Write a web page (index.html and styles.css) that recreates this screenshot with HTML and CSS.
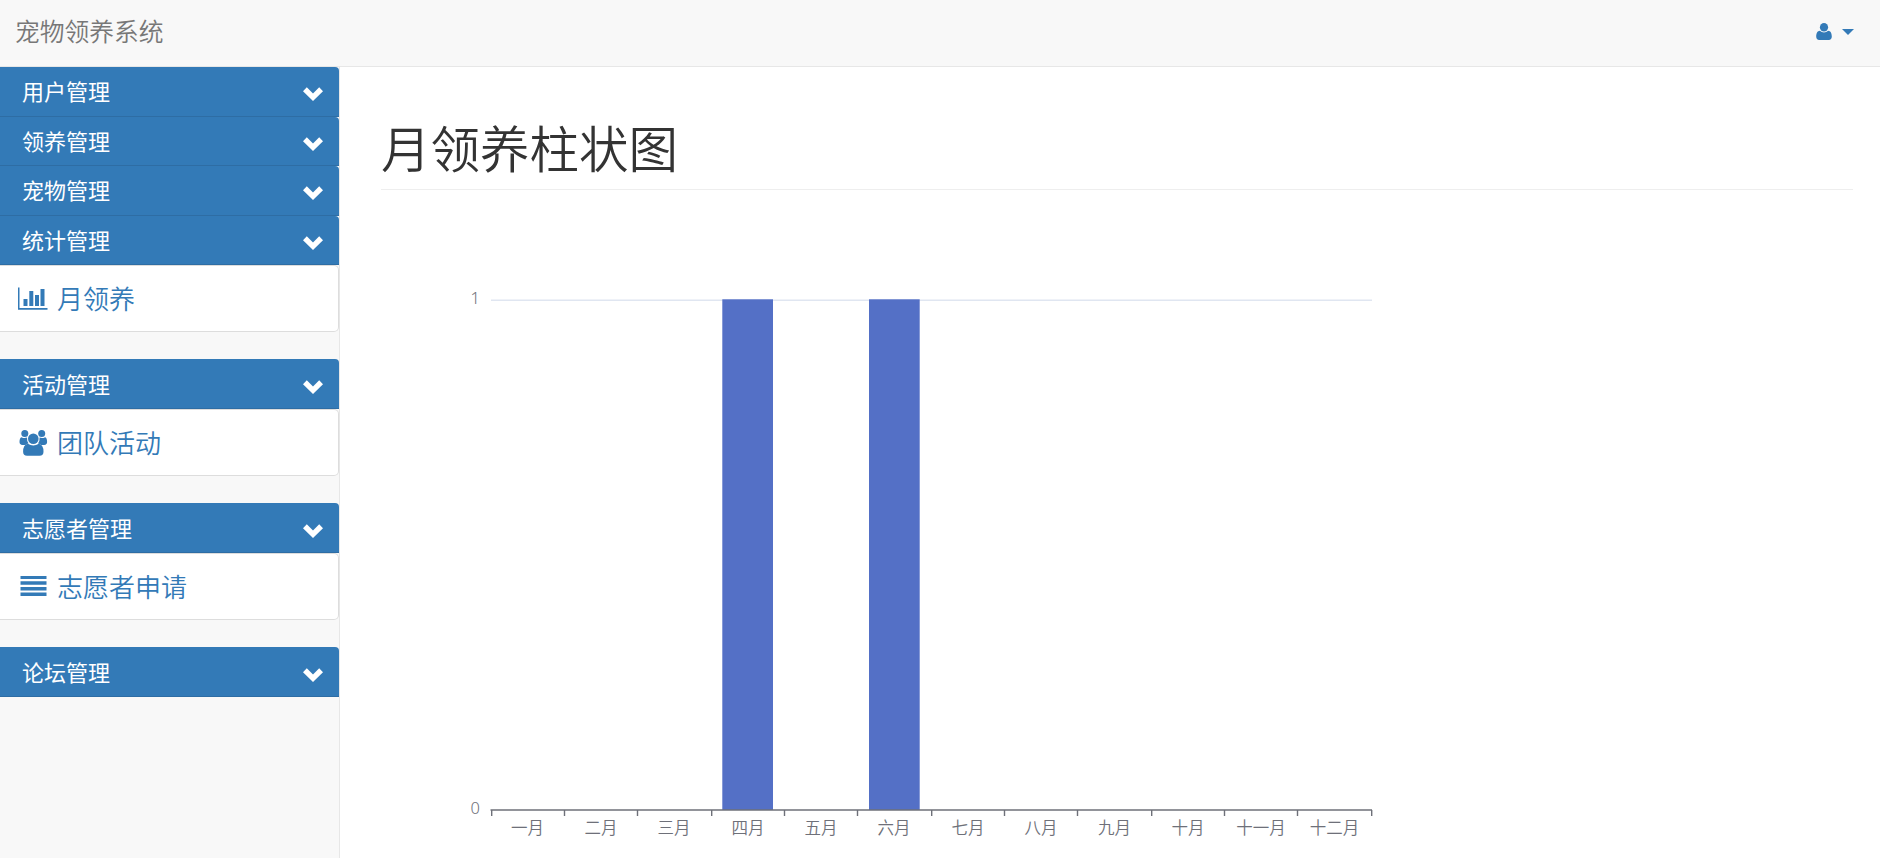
FILE: index.html
```html
<!DOCTYPE html>
<html lang="zh-CN">
<head>
  <meta charset="UTF-8">
  <meta name="viewport" content="width=device-width, initial-scale=1.0">
  <title>宠物领养系统</title>
  <link rel="stylesheet" href="styles.css">
</head>
<body>
  <svg width="0" height="0" class="sprite">
    <symbol id="chevron" viewBox="0 0 20 14">
      <path d="M0 4.2 L3.8 .3 L10 6.4 L16.2 .3 L20 4.2 L10 14 Z"/>
    </symbol>
  </svg>

  <!-- Navbar -->
  <nav class="navbar">
    <a class="navbar-brand">宠物领养系统</a>
    <a class="navbar-user">
      <svg class="icon-user" viewBox="0 0 16 17"><ellipse cx="8" cy="4.3" rx="4.1" ry="4.3"/><path d="M4 7.7C1.2 7.9.2 10.4.2 13.6.2 15.7 1.4 17 3.2 17h9.6c1.8 0 3-1.3 3-3.4 0-3.2-1-5.7-3.8-5.9C10.8 8.9 9.500 9.400 8 9.400S5.200 8.900 4 7.700z"/></svg>
      <span class="caret"></span>
    </a>
  </nav>

  <div class="wrapper">
    <!-- Sidebar -->
    <aside class="sidebar">
      <div class="panel-heading">用户管理<svg class="chevron"><use href="#chevron"/></svg></div>
      <div class="panel-heading">领养管理<svg class="chevron"><use href="#chevron"/></svg></div>
      <div class="panel-heading">宠物管理<svg class="chevron"><use href="#chevron"/></svg></div>
      <div class="panel-heading">统计管理<svg class="chevron"><use href="#chevron"/></svg></div>
      <a class="panel-item">
        <svg class="icon" viewBox="0 0 30 26"><path d="M0 1.500h1.500V22H29.500v1.700H0zM5.500 13h4v7h-4zM11.300 5h4v15h-4zM17 9h4v11h-4zM22.500 3h4v17h-4z"/></svg>
        <span>月领养</span>
      </a>

      <div class="panel-heading">活动管理<svg class="chevron"><use href="#chevron"/></svg></div>
      <a class="panel-item">
        <svg class="icon" viewBox="0 0 30 26">
          <circle cx="6.800" cy="3.500" r="3.500"/><circle cx="23.700" cy="3.500" r="3.500"/><circle cx="15.300" cy="8.800" r="5.300"/>
          <path d="M3.500 7.200q2.700 1.500 5.500.4-.3 3.700 1.600 5.900-2 .3-3.200 1.500H4.500Q1.500 14.600 1.500 12q0-4.200 2-4.800zM27.100 7.200q-2.700 1.500-5.500.4.3 3.700-1.600 5.900 2 .3 3.200 1.500h2.900q3-.4 3-3 0-4.200-2-4.800z"/>
          <path d="M9.800 13.700q5.500 3.600 11 0 4.700.8 4.700 8 0 4.100-4 4.100h-12.400q-4 0-4-4.100 0-7.200 4.700-8z"/>
        </svg>
        <span>团队活动</span>
      </a>

      <div class="panel-heading">志愿者管理<svg class="chevron"><use href="#chevron"/></svg></div>
      <a class="panel-item">
        <svg class="icon" viewBox="0 0 30 26"><path d="M2.500 2h26v3H2.500zM2.500 7.300h26v3.500H2.500zM2.500 13h26v3.500H2.500zM2.500 18.500h26V22H2.500z"/></svg>
        <span>志愿者申请</span>
      </a>

      <div class="panel-heading">论坛管理<svg class="chevron"><use href="#chevron"/></svg></div>
    </aside>

    <!-- Content -->
    <main class="page">
      <h1 class="page-header">月领养柱状图</h1>
      <svg class="chart" width="1100" height="620" viewBox="381 230 1100 620">
        <path class="grid-line" d="M491 300.300H1372"/>
        <g class="bars">
          <rect x="722.300" y="299.300" width="50.700" height="510.700"/>
          <rect x="869" y="299.300" width="50.700" height="510.700"/>
        </g>
        <path class="axis" d="M490.500 810H1372"/>
        <path class="ticks" d="M491.700 810v6M564.500 810v6M637.500 810v6M711.700 810v6M784.500 810v6M857.500 810v6M931.700 810v6M1004.500 810v6M1077.500 810v6M1151.700 810v6M1224.500 810v6M1297.500 810v6M1371.700 810v6"/>
        <g class="y-label">
          <text x="480" y="304">1</text>
          <text x="480" y="814">0</text>
        </g>
        <g class="x-label">
          <text x="527.500" y="834">一月</text>
          <text x="601" y="834">二月</text>
          <text x="674" y="834">三月</text>
          <text x="748" y="834">四月</text>
          <text x="821" y="834">五月</text>
          <text x="894" y="834">六月</text>
          <text x="968" y="834">七月</text>
          <text x="1041" y="834">八月</text>
          <text x="1114.500" y="834">九月</text>
          <text x="1188" y="834">十月</text>
          <text x="1261" y="834">十一月</text>
          <text x="1334.500" y="834">十二月</text>
        </g>
      </svg>
    </main>
  </div>
</body>
</html>
```
FILE: styles.css
```css
* {
  box-sizing: border-box;
}

body {
  margin: 0;
  height: 858px;
  overflow: hidden;
  background-color: #f8f8f8;
  color: #333;
  font-family: "Noto Sans", "Noto Sans CJK SC", sans-serif;
}

.sprite {
  display: none;
}

/* Navbar */
.navbar {
  display: flex;
  justify-content: space-between;
  align-items: center;
  height: 67px;
  padding: 0 26px 3px 15px;
  border-bottom: 1px solid #e7e7e7;
}

.navbar-brand {
  padding-bottom: 3px;
  color: #777;
  font-size: 24.75px;
  font-weight: 350;
}

.navbar-user {
  display: flex;
  align-items: center;
  gap: 10px;
}

.icon-user {
  width: 16px;
  height: 17px;
  fill: #337ab7;
}

.caret {
  border-top: 6px solid #337ab7;
  border-left: 6px solid transparent;
  border-right: 6px solid transparent;
}

.wrapper {
  display: flex;
  height: 791px;
}

/* Sidebar */
.sidebar {
  width: 340px;
  flex-shrink: 0;
  border-right: 1px solid #e7e7e7;
}

.panel-heading {
  display: flex;
  justify-content: space-between;
  align-items: center;
  height: 49.5px;
  padding: 0 16px 0 22px;
  background-color: #337ab7;
  border-bottom: 1px solid #2e6da4;
  border-top-right-radius: 4px;
  color: #fff;
  font-size: 22px;
  line-height: 30px;
}

.panel-item + .panel-heading {
  height: 50px;
}

.chevron {
  width: 20px;
  height: 14px;
  margin-top: 6px;
  fill: #fff;
}

.panel-item {
  display: flex;
  align-items: center;
  gap: 9px;
  height: 67px;
  margin-bottom: 27px;
  padding: 0 18px;
  background-color: #fff;
  border: 1px solid #ddd;
  border-left: 0;
  border-radius: 0 5px 5px 0;
  color: #337ab7;
  font-size: 26px;
  font-weight: 350;
}

.panel-item span {
  padding-bottom: 2px;
}

.icon {
  width: 30px;
  height: 26px;
  fill: #337ab7;
}

/* Content */
.page {
  flex: 1;
  padding: 0 27px 0 41px;
  background-color: #fff;
}

.page-header {
  height: 123px;
  margin: 0 0 40px;
  padding-top: 55px;
  border-bottom: 1px solid #eee;
  font-size: 49.5px;
  font-weight: 350;
  line-height: 54px;
}

/* Chart */
.chart {
  display: block;
}

.bars {
  fill: #5470c6;
}

.grid-line {
  stroke: #e0e6f1;
  stroke-width: 1.4;
}

.axis,
.ticks {
  stroke: #6e7079;
  stroke-width: 1.4;
}

.y-label,
.x-label {
  fill: #6e7079;
  font-size: 16.5px;
  font-weight: 350;
}

.y-label {
  text-anchor: end;
}

.x-label {
  text-anchor: middle;
}
```
